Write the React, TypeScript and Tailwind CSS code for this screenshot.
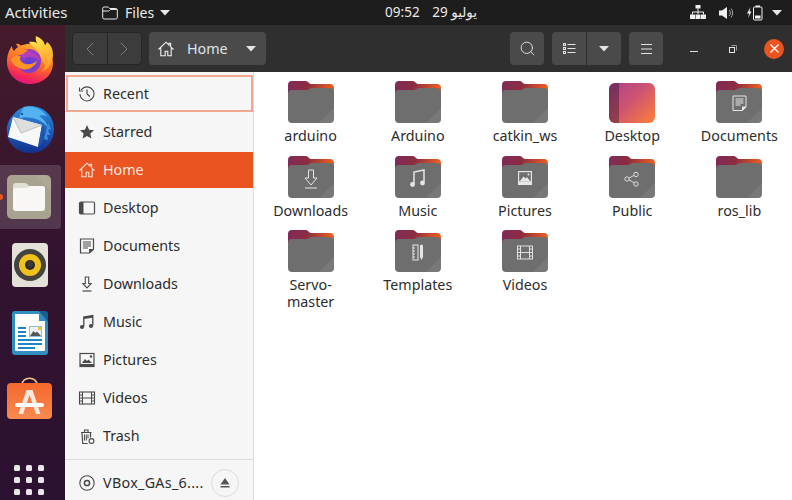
import type { ReactNode } from "react"
import { ChevronLeft, ChevronRight, Search } from "lucide-react"

const font = { fontFamily: '"Noto Sans", "DejaVu Sans", sans-serif' }

const Caret = ({ className = "" }: { className?: string }) => (
  <svg width="10" height="6" viewBox="0 0 10 6" className={className}>
    <path d="M0 0h10L5 5.5z" fill="currentColor" />
  </svg>
)

const icons: Record<string, ReactNode> = {
  recent: (
    <>
      <path d="M3.2 5A7 7 0 1 1 2 9" fill="none" stroke="currentColor" strokeWidth="1.1" />
      <path d="M1.5 2.5v3.5h3.5" fill="none" stroke="currentColor" strokeWidth="1.1" />
      <path d="M9 4.5V9l3 2.5" fill="none" stroke="currentColor" strokeWidth="1.2" />
    </>
  ),
  starred: <path d="M9 2l2.1 4.7 5 .5-3.8 3.3 1.1 5L9 13l-4.4 2.5 1.1-5L1.9 7.2l5-.5z" fill="currentColor" />,
  home: (
    <path d="M1.5 9.5L9 2.2l3 3V3.3h1.6v3.5l2.9 2.7M3.8 8.2v7.5h4.4v-4.5h2.6v4.5h3.4V8.2" fill="none" stroke="currentColor" strokeWidth="1.1" />
  ),
  desktop: (
    <>
      <rect x="1.5" y="3" width="15" height="12" rx="1.5" fill="none" stroke="currentColor" strokeWidth="1.2" />
      <path d="M1.5 4.5A1.5 1.5 0 0 1 3 3h2.5v12H3a1.5 1.5 0 0 1-1.5-1.5z" fill="currentColor" />
    </>
  ),
  documents: (
    <>
      <path d="M2.5 2h13v10.5L11.5 16h-9z" fill="none" stroke="currentColor" strokeWidth="1.2" />
      <path d="M5 5h8M5 7h8M5 9h8M5 11h5" stroke="currentColor" strokeWidth="1" />
      <path d="M11 16v-4h4.5z" fill="currentColor" />
    </>
  ),
  downloads: (
    <>
      <path d="M7.3 2h3.4v6.5h2.5L9 13 4.8 8.5h2.5z" fill="none" stroke="currentColor" strokeWidth="1.1" />
      <path d="M4.5 16h9" stroke="currentColor" strokeWidth="1.2" />
    </>
  ),
  music: (
    <>
      <path d="M5.8 13.5V4l9-1.500v10" fill="none" stroke="currentColor" strokeWidth="1.3" />
      <path d="M5.8 4l9-1.500v2.200l-9 1.400z" fill="currentColor" />
      <circle cx="4" cy="14" r="2.1" fill="currentColor" />
      <circle cx="13" cy="13" r="2.1" fill="currentColor" />
    </>
  ),
  pictures: (
    <>
      <rect x="2" y="2.5" width="14" height="13" fill="none" stroke="currentColor" strokeWidth="1.2" />
      <path d="M2 13h14v3H2zM4 12l3-4 2 2 1.5-1.500L14 12z" fill="currentColor" />
      <circle cx="13" cy="5.5" r="1.2" fill="currentColor" />
    </>
  ),
  videos: (
    <>
      <rect x="1.5" y="3" width="15" height="12" fill="none" stroke="currentColor" strokeWidth="1.1" />
      <path d="M4.5 3v12M13.5 3v12M4.5 9h9M1.5 6h3M1.5 9h3M1.5 12h3M13.5 6h3M13.5 9h3M13.5 12h3" stroke="currentColor" strokeWidth="1" />
    </>
  ),
  trash: (
    <>
      <path d="M3 5.5h10.5M6.5 5V3h3.5v2M4 5.5l.7 11h5M12.5 5.5v5" fill="none" stroke="currentColor" strokeWidth="1.2" />
      <path d="M6.5 7.5v6M8.3 7.5v6M10 7.5v4" stroke="currentColor" strokeWidth="1" />
      <circle cx="13.5" cy="14" r="2.4" fill="none" stroke="currentColor" strokeWidth="1.1" />
    </>
  ),
  disc: (
    <>
      <circle cx="9" cy="9" r="7.2" fill="none" stroke="currentColor" strokeWidth="1.1" />
      <circle cx="9" cy="9" r="2.6" fill="none" stroke="currentColor" strokeWidth="1.5" />
    </>
  ),
}

const SideIcon = ({ name }: { name: string }) => (
  <svg width="18" height="18" viewBox="0 0 18 18" className="shrink-0">
    {icons[name]}
  </svg>
)

const places = [
  { name: "recent", label: "Recent" },
  { name: "starred", label: "Starred" },
  { name: "home", label: "Home" },
  { name: "desktop", label: "Desktop" },
  { name: "documents", label: "Documents" },
  { name: "downloads", label: "Downloads" },
  { name: "music", label: "Music" },
  { name: "pictures", label: "Pictures" },
  { name: "videos", label: "Videos" },
  { name: "trash", label: "Trash" },
]

const folderGlyphs: Record<string, ReactNode> = {
  documents: (
    <>
      <path d="M17 15h13v11l-3.5 3.5H17z" fill="none" stroke="#e6e6e6" strokeWidth="1" />
      <path d="M19.5 18h8M19.5 20h8M19.5 22h8M19.5 24h5" stroke="#e6e6e6" strokeWidth="1" />
      <path d="M26 30v-4.500h4.500z" fill="#e6e6e6" />
    </>
  ),
  downloads: (
    <>
      <path d="M20.5 14h5v8h3.500l-6 7-6-7h3.500z" fill="none" stroke="#e6e6e6" strokeWidth="1" />
      <path d="M17 32h12" stroke="#e6e6e6" strokeWidth="1" />
    </>
  ),
  music: (
    <>
      <path d="M19 28V16l10-2v12" fill="none" stroke="#e6e6e6" strokeWidth="1.5" />
      <circle cx="17.5" cy="28.5" r="2.4" fill="#e6e6e6" />
      <circle cx="27.5" cy="27" r="2.4" fill="#e6e6e6" />
    </>
  ),
  pictures: (
    <>
      <rect x="16" y="15" width="14" height="14" fill="#e6e6e6" />
      <rect x="17.2" y="16.2" width="11.6" height="9" fill="#6e6e6e" />
      <path d="M18 25l3.500-4.500 2 2 1.500-1.500 3 4z" fill="#e6e6e6" />
      <circle cx="26.5" cy="18.5" r="1" fill="#e6e6e6" />
    </>
  ),
  public: (
    <>
      <path d="M18.5 23l8-4.500M18.5 23l8 4.500" stroke="#dcdcdc" strokeWidth="1" />
      <circle cx="18" cy="23" r="2.2" fill="#6e6e6e" stroke="#dcdcdc" />
      <circle cx="27" cy="18.5" r="2.2" fill="#6e6e6e" stroke="#dcdcdc" />
      <circle cx="27" cy="28" r="2.2" fill="#6e6e6e" stroke="#dcdcdc" />
    </>
  ),
  templates: (
    <>
      <rect x="18" y="15" width="5" height="15" fill="none" stroke="#e6e6e6" strokeWidth="1" />
      <path d="M18 18h2M18 21h2M18 24h2M18 27h2" stroke="#e6e6e6" />
      <path d="M25 16a1.500 1.500 0 0 1 3 0v11l-1.500 3-1.500-3z" fill="#e6e6e6" />
    </>
  ),
  videos: (
    <>
      <rect x="15.5" y="16" width="15" height="13" fill="none" stroke="#e0e0e0" strokeWidth="1" />
      <path d="M18.5 16v13M27.5 16v13M18.5 22.5h9M15.5 19h3M15.5 22.5h3M15.5 26h3M27.5 19h3M27.5 22.5h3M27.5 26h3" stroke="#e0e0e0" strokeWidth="1" />
    </>
  ),
}

const Folder = ({ glyph }: { glyph?: string }) => (
  <svg width="46" height="42" viewBox="0 0 46 42" className="shrink-0">
    <defs>
      <linearGradient id="tabGrad" x1="0" y1="0" x2="1" y2="0.15">
        <stop offset="0" stopColor="#7f2a5c" />
        <stop offset="0.45" stopColor="#8c2d3f" />
        <stop offset="1" stopColor="#ee5f1f" />
      </linearGradient>
    </defs>
    <path d="M0 4a4 4 0 0 1 4-4h14c2 0 3 3 5 3h19a4 4 0 0 1 4 4v14H0z" fill="url(#tabGrad)" />
    <path d="M0 13a4 4 0 0 1 4-4h14c3 0 4-2 6-2h18a4 4 0 0 1 4 4v27a4 4 0 0 1-4 4H4a4 4 0 0 1-4-4z" fill="#6e6e6e" />
    <path d="M46 27v11a4 4 0 0 1-4 4H31z" fill="#fff" opacity="0.07" />
    {glyph && folderGlyphs[glyph]}
  </svg>
)

const DesktopTile = () => (
  <svg width="46" height="40" viewBox="0 0 46 40" className="mt-[2px] shrink-0">
    <defs>
      <linearGradient id="deskGrad" x1="0" y1="0" x2="1" y2="0.9">
        <stop offset="0" stopColor="#a8408f" />
        <stop offset="0.5" stopColor="#cf5570" />
        <stop offset="1" stopColor="#fa7b3c" />
      </linearGradient>
    </defs>
    <rect width="46" height="40" rx="6" fill="url(#deskGrad)" />
    <path d="M6 0h4v40H6a6 6 0 0 1-6-6V6a6 6 0 0 1 6-6z" fill="#000" opacity="0.3" />
  </svg>
)

const files: { label: string; glyph?: string; desktop?: boolean }[] = [
  { label: "arduino" },
  { label: "Arduino" },
  { label: "catkin_ws" },
  { label: "Desktop", desktop: true },
  { label: "Documents", glyph: "documents" },
  { label: "Downloads", glyph: "downloads" },
  { label: "Music", glyph: "music" },
  { label: "Pictures", glyph: "pictures" },
  { label: "Public", glyph: "public" },
  { label: "ros_lib" },
  { label: "Servo-master" },
  { label: "Templates", glyph: "templates" },
  { label: "Videos", glyph: "videos" },
]

const Firefox = () => (
  <svg width="46" height="48" viewBox="0 0 46 48">
    <defs>
      <linearGradient id="ffOuter" x1="0.7" y1="0" x2="0.35" y2="1">
        <stop offset="0" stopColor="#ffb32e" />
        <stop offset="0.5" stopColor="#ff6a2a" />
        <stop offset="0.85" stopColor="#f0245c" />
        <stop offset="1" stopColor="#e31587" />
      </linearGradient>
      <linearGradient id="ffTail" x1="0.3" y1="0" x2="0.6" y2="1">
        <stop offset="0" stopColor="#ffe14a" />
        <stop offset="1" stopColor="#ff9a2a" />
      </linearGradient>
      <radialGradient id="ffInner" cx="0.5" cy="0.6" r="0.6">
        <stop offset="0" stopColor="#5b3fd8" />
        <stop offset="1" stopColor="#9a3ec0" />
      </radialGradient>
    </defs>
    <path d="M23 48C10 48 0 38 0 26c0-7 2-12 5-16 0 2 1 4 2 5 3-4 7-6 13-7 8-1 13 1 17 5 5 4 9 8 9 14 0 12-10 21-23 21z" fill="url(#ffOuter)" />
    <path d="M29 0c-1 5 1 8 5 11 5 4 7 10 5 17-1 3-3 6-5 8 8-3 12-10 12-17 0-7-3-11-6-13-1 2-1 3-2 3-1-4-4-7-9-9z" fill="url(#ffTail)" />
    <path d="M22 6c5-1 10 1 14 5 5 5 5 13 2 19l-6-13c-3-5-7-7-10-11z" fill="url(#ffTail)" />
    <circle cx="22" cy="25" r="12" fill="url(#ffInner)" />
    <path d="M12 13c4 0 9 1 13 3 3 2 7 4 8 9-3-4-7-4-11-4-3 0-5 1-5 3-1-3-3-6-5-11z" fill="#c040b8" opacity="0.85" />
    <path d="M4 23c3-3 7-4 10-3-2 2-1 5 2 7 4 2 9 2 14-2-2 6-9 10-15 8C9 31 5 28 4 23z" fill="#ff9426" />
    <path d="M9 8c2-1 4 0 6 3 1 2 3 3 6 3-3 3-6 5-10 5 2-3 1-7-2-11z" fill="#ff8a26" />
  </svg>
)

const Thunderbird = () => (
  <svg width="48" height="48" viewBox="0 0 48 48">
    <defs>
      <linearGradient id="tbBlue" x1="0.5" y1="0" x2="0.5" y2="1">
        <stop offset="0" stopColor="#2f8ee0" />
        <stop offset="1" stopColor="#12308f" />
      </linearGradient>
    </defs>
    <path d="M24 1c14 0 24 10 24 23 0 14-10 24-23 24C12 48 2 40 1 28 0 20 3 14 8 9c4-5 10-8 16-8z" fill="url(#tbBlue)" />
    <path d="M18 2c8-2 18 2 23 9-3-1-6-1-8 0 5 3 8 7 9 12-4-6-10-9-16-10-5-1-9-1-13 1 1-5 3-9 5-12z" fill="#52b3ee" />
    <circle cx="16" cy="9" r="1" fill="#123070" />
    <path d="M7 12l29 8-4 22-30-10z" fill="#f7f7f7" />
    <path d="M7 12l8 16 21-8" fill="#dedede" stroke="#aeb0b8" strokeWidth="0.8" />
    <path d="M36 20c3 6 3 14-2 21l-2 1z" fill="#1b55b0" />
    <path d="M42 18l3 6-3 1 2 5-3 0 1 5-4-1z" fill="#3c8fe0" />
  </svg>
)

const FilesIcon = () => (
  <svg width="44" height="44" viewBox="0 0 44 44">
    <rect width="44" height="44" rx="5" fill="#a8a390" />
    <path d="M28 0h11a5 5 0 0 1 5 5v11z" fill="#fff" opacity="0.07" />
    <path d="M6 11a3 3 0 0 1 3-3h9c2 0 3 3 5 3v8H6z" fill="#e2dfd3" />
    <path d="M6 16c0-2 1-3 3-3h10c2 0 3-2 5-2h12a2 2 0 0 1 2 2v20a3 3 0 0 1-3 3H9a3 3 0 0 1-3-3z" fill="#f8f7f5" />
  </svg>
)

const Rhythmbox = () => (
  <svg width="36" height="44" viewBox="0 0 36 44">
    <rect width="36" height="44" rx="4" fill="#e4e1d8" />
    <circle cx="18" cy="22" r="16" fill="#45433f" />
    <circle cx="18" cy="22" r="11" fill="#f1c21b" />
    <circle cx="18" cy="22" r="5" fill="#2b2a28" />
    <circle cx="18" cy="21" r="3" fill="#3c3b38" />
  </svg>
)

const Writer = () => (
  <svg width="36" height="44" viewBox="0 0 36 44">
    <path d="M3 0h24l9 9v32a3 3 0 0 1-3 3H3a3 3 0 0 1-3-3V3a3 3 0 0 1 3-3z" fill="#2f8fc0" />
    <path d="M3 3h24v7h6v29a1 1 0 0 1-1 1H4a1 1 0 0 1-1-1z" fill="#fff" />
    <path d="M27 0h6a3 3 0 0 1 3 3v8z" fill="#16608f" />
    <path d="M6 16h8v2H6zM6 20h8v2H6zM6 24h8v2H6zM6 28h24v2H6zM6 32h24v2H6zM6 36h17v2H6z" fill="#1d87c6" />
    <rect x="17" y="15" width="13" height="11" fill="#8ac0de" />
    <rect x="18" y="16" width="11" height="9" fill="#eef2f2" />
    <path d="M18 25l3.500-5 2 2 1.500-1.500 4 4.500z" fill="#555" />
    <rect x="26" y="16" width="3" height="3" fill="#f3c13a" />
  </svg>
)

const Software = () => (
  <svg width="45" height="42" viewBox="0 0 45 42">
    <defs>
      <linearGradient id="swGrad" x1="0" y1="0" x2="0" y2="1">
        <stop offset="0" stopColor="#f4682b" />
        <stop offset="1" stopColor="#f98a50" />
      </linearGradient>
    </defs>
    <path d="M15 8c0-9 15-9 15 0" fill="none" stroke="#f2c58f" strokeWidth="1.6" />
    <rect y="6" width="45" height="36" rx="4" fill="url(#swGrad)" />
    <path d="M19.5 13h6l8 24h-4.600l-6.400-19-6.400 19H11.500z" fill="#fbe9df" />
    <rect x="8" y="26" width="29" height="4" rx="2" fill="#fff" />
  </svg>
)

const dockButton = "flex w-[59px] justify-center"

export default function App() {
  return (
    <div style={font} className="flex h-[500px] w-[792px] flex-col overflow-hidden bg-white text-[14.3px]">
      <div className="flex h-[25px] shrink-0 items-center bg-[#1d1d1d] text-[14px] text-[#e9e9e9]">
        <span className="ml-[5px] w-[97px] text-[15px]">Activities</span>
        <svg width="16" height="14" viewBox="0 0 16 14" className="text-[#e9e9e9]">
          <path d="M.7 2.500A1.500 1.500 0 0 1 2.200 1h3.600c1 0 1 1.500 2 1.500h6a1.500 1.500 0 0 1 1.500 1.500v7.500a1.500 1.500 0 0 1-1.500 1.500H2.200a1.500 1.500 0 0 1-1.500-1.500zM.7 5h6c1 0 1-1.500 2-1.500h6" fill="none" stroke="currentColor" strokeWidth="1" />
        </svg>
        <span className="ml-[7px]">Files</span>
        <Caret className="ml-[6px] mr-[215px]" />
        <span className="flex w-[92px] shrink-0 justify-between whitespace-nowrap text-[13.5px]">
          <span>09:52</span>
          <span>29 يوليو</span>
        </span>
        <div className="ml-auto mr-[10px] flex items-center">
          <svg width="16" height="15" viewBox="0 0 16 15" className="mr-[13px]">
            <path d="M5.500 0h5v4.500h-5zM0 10.500h5V15H0zM11 10.500h5V15h-5zM5.500 10.500h5V15h-5z" fill="#f0f0f0" transform="translate(0 -1)" />
            <path d="M8 3.500V9M2.500 9.500V7h11v2.500" fill="none" stroke="#f0f0f0" />
          </svg>
          <svg width="16" height="14" viewBox="0 0 16 14" className="mr-[12px]">
            <path d="M0 4.500h3L8 1v12L3 9.500H0z" fill="#f0f0f0" />
            <path d="M10 4a4 4 0 0 1 0 6M12 2.500a7 7 0 0 1 0 9" fill="none" stroke="#a9a9a9" strokeWidth="1" />
          </svg>
          <svg width="16" height="16" viewBox="0 0 16 16" className="mr-[9px]">
            <path d="M3.500 2L0 8.500h2.200L1 13l3.500-6.500H2.500z" fill="#f0f0f0" />
            <rect x="6.500" y="2" width="8.500" height="13" rx="1" fill="none" stroke="#f0f0f0" />
            <rect x="8.500" y="0.500" width="4.500" height="1.500" fill="#f0f0f0" />
            <rect x="8" y="10.500" width="5.500" height="3" fill="#f0f0f0" />
          </svg>
          <Caret />
        </div>
      </div>

      <div className="flex min-h-0 flex-1">
        <div className="flex w-[65px] shrink-0 flex-col bg-gradient-to-b from-[#451b2c] via-[#32132f] to-[#2b1230] pt-[11px]">
          <div className={dockButton}><Firefox /></div>
          <div className={`${dockButton} mt-[21px]`}><Thunderbird /></div>
          <div className="relative mt-[12px] flex h-[64px] w-[61px] items-center rounded-r-[3px] bg-white/15 pl-[7px]">
            <span className="absolute left-0 top-[29px] h-[6px] w-[3px] rounded-r-full bg-[#e95420]" />
            <FilesIcon />
          </div>
          <div className={`${dockButton} mt-[14px]`}><Rhythmbox /></div>
          <div className={`${dockButton} mt-[24px]`}><Writer /></div>
          <div className={`${dockButton} mt-[22px]`}><Software /></div>
          <div className="ml-[14px] mt-[46px] grid w-[30px] grid-cols-3 gap-[6px]">
            {Array.from({ length: 9 }, (_, i) => (
              <span key={i} className="h-[6px] w-[6px] rounded-[1.5px] bg-[#e9e6e9]" />
            ))}
          </div>
        </div>

        <div className="flex min-w-0 flex-1 flex-col">
          <div className="flex h-[47px] shrink-0 items-center bg-[#2f2f2f] pl-[7px] text-[#e4e4e4]">
            <div className="flex h-[33px] w-[70px] rounded-[4px] border border-[#262626] bg-[#3c3c3c] text-[#858585]">
              <span className="flex flex-1 items-center justify-center border-r border-[#262626]">
                <ChevronLeft size={24} strokeWidth={0.9} />
              </span>
              <span className="flex flex-1 items-center justify-center">
                <ChevronRight size={24} strokeWidth={0.9} />
              </span>
            </div>
            <div className="ml-[7px] flex h-[33px] w-[117px] items-center rounded-[4px] bg-[#4a4a4a] pl-[8px]">
              <svg width="18" height="18" viewBox="0 0 18 18"><g color="#f2f2f2">{icons.home}</g></svg>
              <span className="ml-[12px] text-[#dfe3e8]">Home</span>
              <Caret className="ml-[18px]" />
            </div>
            <div className="ml-[244px] flex h-[33px] w-[34px] items-center justify-center rounded-[4px] bg-[#4a4a4a]">
              <Search size={17} strokeWidth={1.3} />
            </div>
            <div className="ml-[8px] flex h-[33px] w-[69px] rounded-[4px] bg-[#4a4a4a]">
              <span className="flex flex-1 items-center justify-center border-r border-[#2c2c2c]">
                <svg width="13" height="12" viewBox="0 0 13 12" fill="none" stroke="#e4e4e4">
                  <rect x=".5" y=".5" width="2" height="2" />
                  <rect x=".5" y="4.500" width="2" height="2" />
                  <rect x=".5" y="8.500" width="2" height="2" />
                  <path d="M4.500 1.500h8M4.500 5.500h8M4.500 9.500h8" />
                </svg>
              </span>
              <span className="flex flex-1 items-center justify-center"><Caret /></span>
            </div>
            <div className="ml-[8px] flex h-[33px] w-[34px] items-center justify-center rounded-[4px] bg-[#4a4a4a]">
              <svg width="11" height="10" viewBox="0 0 11 10" stroke="#e4e4e4">
                <path d="M0 .5h11M0 5h11M0 9.500h11" />
              </svg>
            </div>
            <svg width="8" height="2" viewBox="0 0 8 2" className="ml-[27px] mt-[7px]">
              <rect width="8" height="1" fill="#e4e4e4" />
            </svg>
            <svg width="8" height="8" viewBox="0 0 8 8" fill="none" stroke="#e4e4e4" className="ml-[31px]">
              <rect x=".5" y="2.500" width="5" height="5" />
              <path d="M2.500 .5h5v5" stroke="#9a9a9a" />
            </svg>
            <span className="ml-[27px] flex h-[20px] w-[20px] items-center justify-center rounded-full bg-[#e95420]">
              <svg width="9" height="9" viewBox="0 0 9 9" stroke="#fff" strokeWidth="1.3">
                <path d="M.5 .5l8 8M8.500 .5l-8 8" />
              </svg>
            </span>
          </div>

          <div className="flex min-h-0 flex-1">
            <div className="flex w-[189px] shrink-0 flex-col border-r border-[#dcdcdc] bg-[#f6f6f6] pt-[3px] text-[#2d2d2d]">
              {places.map((p, i) => (
                <div
                  key={p.name}
                  className={
                    i === 0
                      ? "ml-px mb-px flex h-[37px] items-center border-2 border-[#f2a890] pl-[10px]"
                      : p.name === "home"
                      ? "my-px flex h-[36px] items-center bg-[#e95420] pl-[13px] text-[#fbe9e2]"
                      : "flex h-[38px] items-center pl-[13px]"
                  }
                >
                  <span className={p.name === "home" ? "text-[#fbe0d6]" : "text-[#4a4a4a]"}>
                    <SideIcon name={p.name} />
                  </span>
                  <span className="ml-[7px]">{p.label}</span>
                </div>
              ))}
              <div className="mt-[4px] flex h-[41px] items-center border-t border-[#dcdcdc] pl-[13px] pt-[6px]">
                <span className="text-[#4a4a4a]"><SideIcon name="disc" /></span>
                <span className="ml-[7px] w-[101px] whitespace-nowrap tracking-[0.3px]">VBox_GAs_6....</span>
                <span className="ml-[7px] flex h-[28px] w-[28px] shrink-0 items-center justify-center rounded-full border border-[#dcdcdc] text-[#555]">
                  <svg width="10" height="10" viewBox="0 0 10 10" fill="currentColor">
                    <path d="M5 0l4.500 6.500h-9zM.5 8h9v1.500h-9z" />
                  </svg>
                </span>
              </div>
            </div>

            <div className="min-w-0 flex-1 bg-white pl-[3px] pt-[9px]">
              <div className="grid w-[536px] grid-cols-5 gap-y-[7.5px]">
                {files.map((f) => (
                  <div key={f.label} className="flex h-[67px] flex-col items-center text-[#2d2d2d]">
                    {f.desktop ? <DesktopTile /> : <Folder glyph={f.glyph} />}
                    <span className="mt-[4px] w-[88px] text-center leading-[17px]">{f.label}</span>
                  </div>
                ))}
              </div>
            </div>
          </div>
        </div>
      </div>
    </div>
  )
}
